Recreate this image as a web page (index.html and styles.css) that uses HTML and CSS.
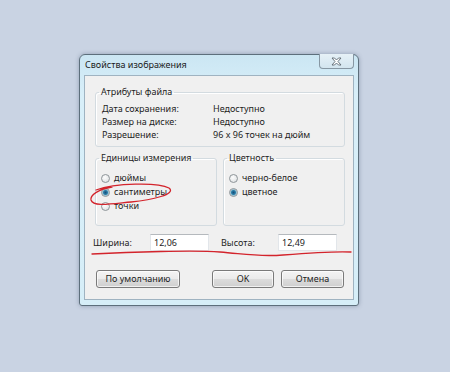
FILE: index.html
```html
<!DOCTYPE html>
<html lang="ru">
<head>
    <meta charset="UTF-8">
    <meta name="viewport" content="width=device-width, initial-scale=1.0">
    <title>Свойства изображения</title>
    <link rel="stylesheet" href="styles.css">
</head>
<body>
    <div class="window">
        <div class="titlebar">
            <span class="caption">Свойства изображения</span>
            <div class="close-btn">
                <svg width="11" height="9" viewBox="0 0 11 9">
                    <path d="M1 1 L3.5 1 L5.5 3 L7.5 1 L10 1 L7 4.5 L10 8 L7.5 8 L5.5 6 L3.5 8 L1 8 L4 4.5 Z" fill="#fff" stroke="#5b6670" stroke-width="0.9" stroke-linejoin="round"/>
                </svg>
            </div>
        </div>
        <div class="client">
            <fieldset class="group attrs">
                <legend>Атрибуты файла</legend>
                <div class="attr-row"><span class="attr-name">Дата сохранения:</span><span>Недоступно</span></div>
                <div class="attr-row"><span class="attr-name">Размер на диске:</span><span>Недоступно</span></div>
                <div class="attr-row"><span class="attr-name">Разрешение:</span><span>96 x 96 точек на дюйм</span></div>
            </fieldset>
            <div class="group-row">
                <fieldset class="group options">
                    <legend>Единицы измерения</legend>
                    <div class="radio"><span class="radio-dot"></span>дюймы</div>
                    <div class="radio"><span class="radio-dot checked"></span>сантиметры</div>
                    <div class="radio"><span class="radio-dot"></span>точки</div>
                </fieldset>
                <fieldset class="group options">
                    <legend>Цветность</legend>
                    <div class="radio"><span class="radio-dot"></span>черно-белое</div>
                    <div class="radio"><span class="radio-dot checked"></span>цветное</div>
                </fieldset>
            </div>
            <div class="size-row">
                <div class="size-field">
                    <span class="size-label">Ширина:</span>
                    <span class="size-input">12,06</span>
                </div>
                <div class="size-field">
                    <span class="size-label">Высота:</span>
                    <span class="size-input">12,49</span>
                </div>
            </div>
            <div class="button-row">
                <div class="btn btn-default">По умолчанию</div>
                <div class="btn btn-ok">OK</div>
                <div class="btn btn-cancel">Отмена</div>
            </div>
        </div>
    </div>

    <!-- red pen marks drawn over the screenshot -->
    <svg class="marks" width="450" height="372" viewBox="0 0 450 372">
        <path d="M96 190 C115 183, 158 182, 169 188 C177 194, 152 200, 131 202 C110 204, 93 207, 91 200 C90 195, 99 189, 112 187" fill="none" stroke="#d3242c" stroke-width="1.3" stroke-linecap="round"/>
        <path d="M92 254 C130 252, 195 250, 220 252 S258 257, 283 255 S333 251, 351 252" fill="none" stroke="#d3242c" stroke-width="1.3" stroke-linecap="round"/>
    </svg>
</body>
</html>
```

FILE: styles.css
```css
body {
    margin: 0;
    padding: 54px 0 0 79px;
    height: 100vh;
    box-sizing: border-box;
    overflow: hidden;
    background: #c9d3e3;
    font-family: 'Noto Sans', 'Open Sans', sans-serif;
    font-size: 9px;
    color: #1e1e1e;
}
.window {
    width: 280px;
    box-sizing: border-box;
    border: 1px solid #5d6f7c;
    border-radius: 6px 6px 3px 3px;
    padding: 0 4px 5px;
    background: linear-gradient(180deg, #cbe6f3, #d8eff9 40px, #d6eef8);
    box-shadow: 0 0 4px rgba(40, 60, 90, 0.35);
}
.titlebar {
    height: 20px;
    display: flex;
    justify-content: space-between;
    align-items: flex-start;
}
.caption {
    line-height: 20px;
    padding-left: 1px;
    color: #1a1a1a;
}
.close-btn {
    width: 35px;
    height: 15px;
    margin-top: -1px;
    box-sizing: border-box;
    border: 1px solid #8797a3;
    border-top: none;
    border-radius: 0 0 4px 4px;
    background: linear-gradient(180deg, #e6f1f7, #d3e5ef);
    display: flex;
    justify-content: center;
    align-items: center;
}
.client {
    border: 1px solid #9fb3c1;
    background: #f0f0f0;
    padding: 10px 8px 11px 10px;
}
.group {
    margin: 0;
    border: 1px solid #d3dbe0;
    border-radius: 3px;
    min-width: 0;
    box-shadow: inset 1px 1px 0 #fff;
}
.group legend {
    padding: 0 2px;
    margin-left: -3px;
    line-height: 12px;
}
.attrs {
    padding: 4px 6px 5px;
}
.attr-row {
    display: flex;
    line-height: 13px;
}
.attr-name {
    width: 111px;
}
.group-row {
    display: flex;
    gap: 6px;
    margin-top: 5px;
}
.options {
    flex: 1;
    padding: 7px 6px 12px 5px;
}
.options legend {
    margin-left: -2px;
}
.radio {
    display: flex;
    align-items: center;
    line-height: 14px;
}
.radio-dot {
    width: 9px;
    height: 9px;
    box-sizing: border-box;
    border-radius: 50%;
    border: 1px solid #8e9599;
    background: radial-gradient(circle at 40% 35%, #fdfdfd, #d9dcde);
    margin-right: 4px;
}
.radio-dot.checked {
    background: radial-gradient(circle, #174e7a 0, #2b7ea8 2px, #9cc3d4 3px, #e6eef2 4px);
}
.size-row {
    display: flex;
    align-items: center;
    margin: 8px 0 0 -2px;
}
.size-field {
    display: flex;
    align-items: center;
    margin-right: 12px;
}
.size-label {
    width: 57px;
}
.size-input {
    width: 59px;
    height: 17px;
    box-sizing: border-box;
    background: #fff;
    border: 1px solid #e2e6ea;
    border-top-color: #b5b9bd;
    padding-left: 3px;
    line-height: 15px;
}
.button-row {
    display: flex;
    margin: 19px 1px 0 1px;
}
.btn {
    height: 18px;
    box-sizing: border-box;
    border: 1px solid #7a7a7a;
    border-radius: 3px;
    background: linear-gradient(180deg, #f4f4f4, #ebebeb 50%, #dcdcdc 51%, #cfcfcf);
    text-align: center;
    line-height: 16px;
    box-shadow: inset 0 0 0 1px rgba(255, 255, 255, 0.7);
}
.btn-default {
    width: 84px;
}
.btn-ok {
    width: 62px;
    margin-left: auto;
}
.btn-cancel {
    width: 63px;
    margin-left: 7px;
}
.marks {
    position: absolute;
    top: 0;
    left: 0;
    pointer-events: none;
}
```
